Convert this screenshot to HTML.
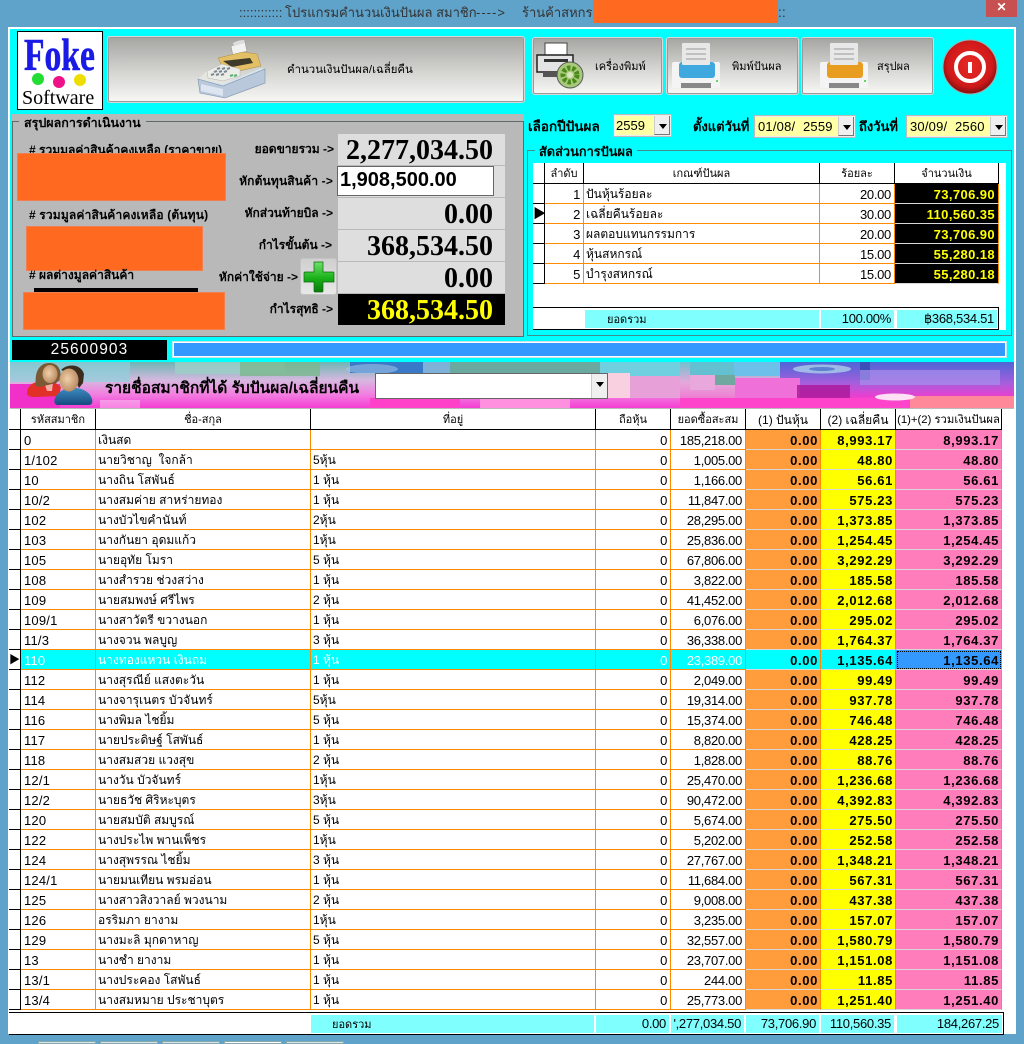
<!DOCTYPE html>
<html lang="th"><head><meta charset="utf-8"><title>โปรแกรมคำนวนเงินปันผล</title>
<style>
*{box-sizing:border-box}
html,body{margin:0;padding:0}
body{width:1024px;height:1044px;position:relative;overflow:hidden;background:#5fa3cb;font-family:"Liberation Sans","WenQuanYi Zen Hei","Noto Sans CJK SC",sans-serif;font-size:11px;color:#000}
.a{position:absolute}
.t{position:absolute;white-space:nowrap}
.b{font-weight:bold}
.r{text-align:right}
.c{text-align:center}
.btn{position:absolute;border:2px solid #d8d8d8;outline:1px solid #9a9a9a;outline-offset:-2px;background:linear-gradient(#a6a6a3,#d5d5d2 55%,#f6f6f4);border-radius:3px}
.big{position:absolute;left:338px;width:167px;padding-right:12px;height:31px;background:#dedede;text-align:right;font:bold 28px/33px "Liberation Serif",serif;overflow:hidden}
.lb{position:absolute;font-size:12px;font-weight:bold;white-space:nowrap;line-height:14px}
.or{position:absolute;background:#ff6a20;border:1px solid #f08050}
.cb{position:absolute;height:23px;background:#ffffa6;border:2px solid #eee;outline:1px solid #bbb;outline-offset:-1px;font-size:13px;line-height:19px;padding-left:2px}
.ar{position:absolute;right:0;top:0;bottom:0;width:16px;background:#efefef;border-left:1px solid #ccc;border-right:1px solid #777;border-bottom:1px solid #777}
.ar:after{content:"";position:absolute;left:4px;top:8px;border:4px solid transparent;border-top:5px solid #000;border-bottom:0}
table{border-collapse:separate;border-spacing:0;table-layout:fixed;position:absolute;background:#fff}
td,th{overflow:hidden;white-space:nowrap;font-weight:normal;border-right:1px solid #ff8a00;border-bottom:1px solid #ff8a00;line-height:17px;padding:2px 3px 0 2px}
th{font-size:11px;border-color:#000;text-align:center;padding:2px 0 0}
#m{left:9px;top:409px;width:993px}
#m td{height:20px;font-size:12px}
#m th{height:21px}
#m td:nth-child(1){border-color:#000;padding:0}
#m td:nth-child(2){font-size:13px;padding-left:3px;letter-spacing:.2px}
#m td:nth-child(3),#m td:nth-child(4){font-size:12px;padding-left:2px}
#m td:nth-child(5),#m td:nth-child(6){text-align:right;font-size:13px;padding-right:3px;letter-spacing:-.3px}
#m td:nth-child(7),#m td:nth-child(8),#m td:nth-child(9){text-align:right;font-weight:bold;font-size:13px;letter-spacing:.65px;padding-right:2px;border-bottom-color:#d8d8d8}
#m td:nth-child(7){background:#ff9c3c}
#m td:nth-child(8){background:#ffff00}
#m td:nth-child(9){background:#ff7dbb}
#m tr.s td{background:#00ffff!important;color:#fff}
#m tr.s td:nth-child(1){background:#fff!important;color:#000;padding:0}
#m tr.s td:nth-child(7),#m tr.s td:nth-child(8),#m tr.s td:nth-child(9){color:#000}
#m tr.s td:nth-child(9){background:#3399ff!important;outline:1px dotted #000;outline-offset:-2px}
#d{left:533px;top:163px;width:466px}
#d td{height:20px;font-size:12px}
#d th{height:21px}
#d td:nth-child(1){border-color:#000;padding:0}
#d td:nth-child(2),#d td:nth-child(4){text-align:right;font-size:13px;letter-spacing:-.3px;padding-right:3px}
#d td:nth-child(5){background:#000;color:#ffff00;text-align:right;font-weight:bold;font-size:13px;letter-spacing:.4px;padding-right:3px;border-bottom-color:#d8d8d8}
.f{position:absolute;background:#80ffff;height:18px;line-height:18px;font-size:13px;text-align:right;padding-right:3px;letter-spacing:-.3px;white-space:nowrap;overflow:hidden}
.f.l{font-size:11px;text-align:left;letter-spacing:0;line-height:17px;padding-top:2px}
</style></head><body>

<!-- title bar -->
<div class="a" style="left:0;top:0;width:1024px;height:27px;background:#5fa3cb"></div>
<div class="t" style="left:239px;top:4px;font-size:13px;line-height:18px;color:#333">::::::::::::</div>
<div class="t" style="left:285px;top:4px;font-size:13px;line-height:18px;color:#333">โปรแกรมคำนวนเงินปันผล สมาชิก</div>
<div class="t" style="left:476px;top:4px;font-size:13px;line-height:18px;color:#333;letter-spacing:1px">----&gt;</div>
<div class="t" style="left:522px;top:4px;font-size:13px;line-height:18px;color:#333">ร้านค้าสหกร</div>
<div class="a" style="left:593px;top:0;width:185px;height:23px;background:#ff6a20"></div>
<div class="t" style="left:778px;top:4px;font-size:14px;color:#333">::</div>
<div class="a" style="left:986px;top:0;width:31px;height:17px;background:#c75050;color:#fff;font:bold 12px/15px 'Liberation Sans',sans-serif;text-align:center">✕</div>

<!-- white client -->
<div class="a" style="left:8px;top:27px;width:1008px;height:1007px;background:#fff"></div>
<div class="a" style="left:10px;top:29px;width:1004px;height:333px;background:#00ffff"></div>

<!-- logo -->
<div class="a" style="left:17px;top:31px;width:86px;height:79px;background:#fff;border:1px solid #000"></div>
<div class="t" style="left:24px;top:32px;font:bold 46px/46px 'Liberation Serif',serif;color:#1a1ae6;-webkit-text-stroke:.6px #1a1ae6;transform:scaleX(.73);transform-origin:left">Foke</div>
<div class="a" style="left:32px;top:73px;width:12px;height:12px;border-radius:50%;background:#22dd33"></div>
<div class="a" style="left:53px;top:76px;width:12px;height:12px;border-radius:50%;background:#ee1188"></div>
<div class="a" style="left:74px;top:74px;width:12px;height:12px;border-radius:50%;background:#eedd00"></div>
<div class="t" style="left:22px;top:88px;font:20px/20px 'Liberation Serif',serif">Software</div>

<!-- calc button -->
<div class="btn" style="left:107px;top:36px;width:418px;height:67px"></div>
<svg class="a" style="left:190px;top:36px" width="80" height="64" viewBox="0 0 80 64">
<path d="M41 10l14-4 2 9-14 5z" fill="#f2f2f2" stroke="#999" stroke-width=".6"/>
<path d="M43 7c3-2 8-3 11-3l1 3-11 3z" fill="#ddd"/>
<path d="M28 22l25-6 14 2 4 12-35 8z" fill="#e3bf66" stroke="#a98b3c" stroke-width=".5"/>
<path d="M33 25l27-3 3 5-21 4z" fill="#3e3b2b"/>
<path d="M8 43l9-8 15-7 18 5 0 7-17 8z" fill="#e6e6e0"/>
<path d="M17 35l15-7 18 5 0 7-17 5-15-3z" fill="#ecece8" stroke="#b4b4b0" stroke-width=".5"/>
<path d="M27 33l3-1m2 1l3-1m2 1l3-1M24 36l3-1m2 1l3-1m2 1l3-1M21 39l3-1m2 1l3-1m2 1l3-1" stroke="#7c8894" stroke-width="2"/>
<path d="M40 40l3-1m1 1l3-1" stroke="#5cb070" stroke-width="2"/>
<path d="M8 43l25 5 38-16 4 1-42 17z" fill="#d8e2ec"/>
<path d="M8 43l2 14 25 5 40-15V33L33 50z" fill="#b9c8da" stroke="#7c93ad" stroke-width=".6"/>
<path d="M11 48l22 5v7l-22-5z" fill="#dde6f0"/>
</svg>
<div class="t" style="left:287px;top:63px;font-size:11.4px;line-height:14px">คำนวนเงินปันผล/เฉลี่ยคืน</div>

<!-- small buttons -->
<div class="btn" style="left:532px;top:37px;width:131px;height:58px"></div>
<svg class="a" style="left:534px;top:41px" width="52" height="49" viewBox="0 0 52 49">
<path d="M11 2h22v12H11z" fill="#fff" stroke="#444"/>
<path d="M3 14h36v17H3z" fill="#e4e4e4" stroke="#222" stroke-width="1.5"/>
<path d="M10 18h24v3H10z" fill="#333"/>
<path d="M9 31h26v5H9z" fill="#555"/>
<circle cx="36" cy="34" r="13" fill="#a9c97a" stroke="#555"/>
<circle cx="36" cy="34" r="3" fill="#d6e6bf"/>
<circle cx="36" cy="34" r="7" fill="none" stroke="#4a8a1a" stroke-width="5" stroke-dasharray="3.2 1.8"/>
</svg>
<div class="t" style="left:595px;top:60px;font-size:11px;line-height:14px">เครื่องพิมพ์</div>

<div class="btn" style="left:666px;top:37px;width:133px;height:58px"></div>
<svg class="a" style="left:671px;top:42px" width="50" height="48" viewBox="0 0 50 48">
<rect x="1" y="20" width="48" height="26" rx="2" fill="#f4f4f4"/>
<rect x="8" y="20" width="36" height="16" rx="3" fill="#3fa9df"/>
<rect x="11" y="1" width="28" height="22" rx="1" fill="#e8e8e8"/>
<path d="M15 7h20M15 12h20M15 17h20" stroke="#999"/>
<path d="M10 41h30v5H10z" fill="#888"/><circle cx="46" cy="39" r="1" fill="#3c3"/>
</svg>
<div class="t" style="left:732px;top:60px;font-size:11px;line-height:14px">พิมพ์ปันผล</div>

<div class="btn" style="left:801px;top:37px;width:133px;height:58px"></div>
<svg class="a" style="left:819px;top:42px" width="50" height="48" viewBox="0 0 50 48">
<rect x="1" y="20" width="48" height="26" rx="2" fill="#f4f4f4"/>
<rect x="8" y="20" width="36" height="16" rx="3" fill="#e89c20"/>
<rect x="11" y="1" width="28" height="22" rx="1" fill="#e8e8e8"/>
<path d="M15 7h20M15 12h20M15 17h20" stroke="#999"/>
<path d="M10 41h30v5H10z" fill="#888"/><circle cx="46" cy="39" r="1" fill="#3c3"/>
</svg>
<div class="t" style="left:877px;top:60px;font-size:11px;line-height:14px">สรุปผล</div>

<svg class="a" style="left:942px;top:38px" width="56" height="58" viewBox="0 0 56 58">
<defs><radialGradient id="rd" cx=".5" cy=".45" r=".55"><stop offset="0" stop-color="#e62a24"/><stop offset=".75" stop-color="#d01a1a"/><stop offset="1" stop-color="#7c1010"/></radialGradient></defs>
<circle cx="28" cy="29" r="27" fill="url(#rd)" stroke="#a8a8a8" stroke-width="1"/>
<circle cx="28" cy="29" r="14" fill="none" stroke="#fff" stroke-width="4"/>
<path d="M26 24h4v11h-4z" fill="#fff"/>
</svg>

<!-- left panel -->
<div class="a" style="left:12px;top:114px;width:512px;height:223px;background:#b9b9b9"></div>
<div class="a" style="left:12px;top:121px;width:512px;height:216px;border:1px solid #5f6a6a"></div>
<div class="t b" style="left:19px;top:116px;padding:0 5px;background:#b9b9b9;font-size:12.5px;line-height:15px">สรุปผลการดำเนินงาน</div>

<div class="lb" style="left:29px;top:143px">#&nbsp;รวมมูลค่าสินค้าคงเหลือ (ราคาขาย)</div>
<div class="or" style="left:17px;top:153px;width:209px;height:48px"></div>
<div class="lb" style="left:29px;top:208px;letter-spacing:.15px">#&nbsp;รวมมูลค่าสินค้าคงเหลือ (ต้นทุน)</div>
<div class="or" style="left:26px;top:226px;width:177px;height:45px"></div>
<div class="lb" style="left:29px;top:268px">#&nbsp;ผลต่างมูลค่าสินค้า</div>
<div class="a" style="left:34px;top:288px;width:164px;height:5px;background:#000"></div>
<div class="or" style="left:23px;top:292px;width:202px;height:38px"></div>

<div class="lb r" style="right:690px;top:142px">ยอดขายรวม -&gt;</div>
<div class="lb r" style="right:691px;top:174px;letter-spacing:.15px">หักต้นทุนสินค้า -&gt;</div>
<div class="lb r" style="right:691px;top:206px">หักส่วนท้ายบิล -&gt;</div>
<div class="lb r" style="right:692px;top:238px">กำไรขั้นต้น -&gt;</div>
<div class="lb r" style="right:726px;top:270px">หักค่าใช้จ่าย -&gt;</div>
<div class="lb r" style="right:691px;top:302px">กำไรสุทธิ -&gt;</div>

<div class="big" style="top:134px">2,277,034.50</div>
<div class="big" style="top:166px"></div>
<div class="a" style="left:337px;top:166px;width:157px;height:30px;background:#fff;border:1px solid #666;font:bold 20px/27px 'Liberation Sans',sans-serif;padding-left:2px;color:#000">1,908,500.00</div>
<div class="big" style="top:198px">0.00</div>
<div class="big" style="top:230px">368,534.50</div>
<div class="big" style="top:262px">0.00</div>
<div class="big" style="top:294px;background:#000;color:#ffff00">368,534.50</div>

<div class="a" style="left:300px;top:258px;width:37px;height:37px;background:linear-gradient(#cfcfcf,#e8e8e8);border:1px solid #c4c4c4;border-radius:3px"></div>
<svg class="a" style="left:303px;top:261px" width="32" height="32" viewBox="0 0 32 32">
<defs><linearGradient id="gp" x1="0" y1="0" x2="0" y2="1"><stop offset="0" stop-color="#6fe06a"/><stop offset=".55" stop-color="#18b018"/><stop offset="1" stop-color="#0b7a0b"/></linearGradient></defs>
<path d="M11 1h9v10h10a1 1 0 0 1 1 1v9h-11v9a1 1 0 0 1-1 1h-7a1 1 0 0 1-1-1v-9H1v-9a1 1 0 0 1 1-1h9z" fill="url(#gp)" stroke="#0d6a0d" stroke-width=".7"/>
</svg>

<!-- selectors -->
<div class="lb" style="left:528px;top:120px;font-size:13.5px">เลือกปีปันผล</div>
<div class="cb" style="left:613px;top:114px;width:59px;padding-left:1px">2559<span class="ar"></span></div>
<div class="lb" style="left:693px;top:120px;font-size:13px">ตั้งแต่วันที่</div>
<div class="cb" style="left:754px;top:115px;width:102px;letter-spacing:.2px">01/08/&nbsp; 2559<span class="ar"></span></div>
<div class="lb" style="left:859px;top:120px;font-size:13px">ถึงวันที่</div>
<div class="cb" style="left:906px;top:115px;width:102px;letter-spacing:.2px">30/09/&nbsp; 2560<span class="ar"></span></div>

<!-- dividend group -->
<div class="a" style="left:527px;top:150px;width:485px;height:186px;border:1px solid #3f8f8f"></div>
<div class="t b" style="left:535px;top:144px;padding:0 4px;background:#00ffff;font-size:12.8px;line-height:15px">สัดส่วนการปันผล</div>
<div class="a" style="left:533px;top:163px;width:473px;height:167px;background:#fff"></div>

<table id="d">
<colgroup><col style="width:12px"><col style="width:39px"><col style="width:236px"><col style="width:75px"><col style="width:104px"></colgroup>
<tr><th>&nbsp;<th>ลำดับ<th>เกณฑ์ปันผล<th>ร้อยละ<th style="border-right:1px solid #000">จำนวนเงิน</tr>
<tr><td><td>1<td>ปันหุ้นร้อยละ<td>20.00<td>73,706.90</tr>
<tr><td style="font-size:13px;line-height:18px;text-align:center;color:#000">▶<td>2<td>เฉลี่ยคืนร้อยละ<td>30.00<td>110,560.35</tr>
<tr><td><td>3<td>ผลตอบแทนกรรมการ<td>20.00<td>73,706.90</tr>
<tr><td><td>4<td>หุ้นสหกรณ์<td>15.00<td>55,280.18</tr>
<tr><td><td>5<td>บำรุงสหกรณ์<td>15.00<td>55,280.18</tr>
</table>
<div class="a" style="left:533px;top:307px;width:466px;height:1px;background:#000"></div>
<div class="a" style="left:533px;top:329px;width:466px;height:1px;background:#000"></div>
<div class="a" style="left:998px;top:307px;width:1px;height:23px;background:#000"></div>
<div class="f l" style="left:585px;top:310px;width:234px;padding-left:22px">ยอดรวม</div>
<div class="f" style="left:821px;top:310px;width:73px">100.00%</div>
<div class="f" style="left:897px;top:310px;width:100px">฿368,534.51</div>

<!-- status -->
<div class="a c" style="left:12px;top:340px;width:155px;height:20px;background:#000;color:#fff;font-size:15.5px;line-height:20px;letter-spacing:1.1px">25600903</div>
<div class="a" style="left:172px;top:341px;width:835px;height:17px;background:#3399ff;border:1px solid #c8e4e8;outline:1px solid #fff;outline-offset:-2px"></div>

<!-- banner -->
<svg class="a" style="left:10px;top:362px" width="1004" height="46" viewBox="0 0 1004 46">
<defs>
<linearGradient id="bb" x1="0" y1="0" x2="0" y2="1"><stop offset="0" stop-color="#6cb6b4"/><stop offset=".4" stop-color="#d7b8df"/><stop offset=".7" stop-color="#f27fe0"/><stop offset="1" stop-color="#f43fd4"/></linearGradient>
<linearGradient id="b2" x1="0" y1="0" x2="0" y2="1"><stop offset="0" stop-color="#4d66d6"/><stop offset=".45" stop-color="#a45fdc"/><stop offset=".75" stop-color="#ea3fcf"/><stop offset="1" stop-color="#ff66cc"/></linearGradient>
<linearGradient id="b3" x1="0" y1="0" x2="0" y2="1"><stop offset="0" stop-color="#6fc2ce"/><stop offset=".45" stop-color="#e6a8da"/><stop offset="1" stop-color="#f45fcf"/></linearGradient>
</defs>
<rect width="1004" height="46" fill="url(#bb)"/>
<rect x="0" y="0" width="120" height="20" fill="#8fd0dc" opacity=".7"/>
<rect x="0" y="22" width="50" height="24" fill="#f030c8"/>
<rect x="165" y="0" width="110" height="12" fill="#9ed0c8" opacity=".8"/>
<rect x="230" y="0" width="80" height="14" fill="#7cb88e" opacity=".8"/>
<rect x="340" y="0" width="73" height="11" fill="#3a78c8"/>
<rect x="413" y="0" width="27" height="12" fill="#7fb0d8"/>
<rect x="440" y="0" width="150" height="12" fill="#6aa8a0"/>
<rect x="590" y="0" width="90" height="14" fill="#70d0e0"/>
<rect x="90" y="38" width="40" height="8" fill="#fff" opacity=".35"/>
<rect x="360" y="36" width="90" height="10" fill="#ff40c8"/>
<rect x="470" y="36" width="90" height="10" fill="#ff90e0"/>
<rect x="598" y="11" width="22" height="25" fill="#f8d0e0"/>
<rect x="620" y="14" width="60" height="22" fill="#e8a0d8"/>
<rect x="670" y="0" width="100" height="46" fill="url(#b3)"/>
<rect x="680" y="0" width="44" height="14" fill="#62c0d0"/>
<rect x="724" y="0" width="46" height="14" fill="#6cc0ea"/>
<rect x="680" y="13" width="25" height="15" fill="#e8a8dc"/>
<rect x="705" y="13" width="20" height="10" fill="#70a8a0"/>
<rect x="770" y="0" width="234" height="46" fill="url(#b2)"/>
<rect x="725" y="16" width="65" height="20" fill="#ee70d8"/>
<rect x="787" y="23" width="53" height="13" fill="#a81898" opacity=".8"/>
<rect x="850" y="0" width="10" height="18" fill="#3c50b8"/>
<rect x="850" y="8" width="140" height="15" fill="#a890ec" opacity=".7"/>
<rect x="670" y="36" width="240" height="10" fill="#ff44cc"/>
<rect x="900" y="34" width="104" height="12" fill="#ff8899"/>
<ellipse cx="812" cy="7" rx="29" ry="4.5" fill="#a8c8e8" opacity=".85"/>
<ellipse cx="812" cy="7" rx="13" ry="2" fill="#5f80d0"/>
<ellipse cx="362" cy="7" rx="26" ry="5" fill="#a8c8e8" opacity=".55"/>
<ellipse cx="885" cy="35" rx="20" ry="3.5" fill="#ffe0f4"/>
</svg>
<div class="a" style="left:10px;top:408px;width:1004px;height:1px;background:#bbb"></div>

<svg class="a" style="left:26px;top:362px" width="70" height="46" viewBox="0 0 70 46">
<defs><radialGradient id="sk" cx=".42" cy=".45" r=".6"><stop offset="0" stop-color="#f0d0a8"/><stop offset="1" stop-color="#b98a62"/></radialGradient>
<linearGradient id="bl" x1="0" y1="0" x2="0" y2="1"><stop offset="0" stop-color="#3c8cc0"/><stop offset="1" stop-color="#174a80"/></linearGradient></defs>
<path d="M1 31c0-7 6-11 14-12l12 0 8 6-2 9-24 1c-5 0-8-1-8-4z" fill="#e03028"/>
<path d="M18 20l9 0-1 9-5 0z" fill="#f0b0a8"/>
<path d="M10 24c-2-13 3-23 13-23s13 8 11 17l-4 3-16 4z" fill="#7a5a34"/>
<ellipse cx="24" cy="12" rx="7.5" ry="9" fill="url(#sk)"/>
<path d="M31 43c-3-1-3-4-2-7 3-6 9-9 13-10h9c6 1 13 4 15 11 1 3 0 6-3 6z" fill="url(#bl)"/>
<path d="M35 8c7-7 20-6 23 4l-1 9-4 5-7-14z" fill="#3c2c1c"/>
<ellipse cx="43" cy="18" rx="9.5" ry="11.5" fill="url(#sk)"/>
</svg>
<div class="t b" style="left:105px;top:379px;font-size:15.5px;line-height:19px">รายชื่อสมาชิกที่ได้ รับปันผล/เฉลี่ยนคืน</div>
<div class="a" style="left:375px;top:373px;width:233px;height:26px;background:#fff;border:1px solid #666"><span class="ar" style="width:16px;border:0;border-left:1px solid #ccc"></span></div>

<!-- main table -->
<table id="m">
<colgroup><col style="width:12px"><col style="width:75px"><col style="width:215px"><col style="width:285px"><col style="width:75px"><col style="width:75px"><col style="width:75px"><col style="width:75px"><col style="width:106px"></colgroup>
<tr><th>&nbsp;<th>รหัสสมาชิก<th>ชื่อ-สกุล<th>ที่อยู่<th>ถือหุ้น<th>ยอดซื้อสะสม<th style="font-size:12px">(1) ปันหุ้น<th style="font-size:12px">(2) เฉลี่ยคืน<th style="font-size:11.3px">(1)+(2) รวมเงินปันผล</tr>
<tr><td><td>0<td>เงินสด<td><td>0<td>185,218.00<td>0.00<td>8,993.17<td>8,993.17</tr>
<tr><td><td>1/102<td>นายวิชาญ&nbsp; ใจกล้า<td>5หุ้น<td>0<td>1,005.00<td>0.00<td>48.80<td>48.80</tr>
<tr><td><td>10<td>นางถิน โสพันธ์<td>1 หุ้น<td>0<td>1,166.00<td>0.00<td>56.61<td>56.61</tr>
<tr><td><td>10/2<td>นางสมค่าย สาหร่ายทอง<td>1 หุ้น<td>0<td>11,847.00<td>0.00<td>575.23<td>575.23</tr>
<tr><td><td>102<td>นางบัวไขคำนันท์<td>2หุ้น<td>0<td>28,295.00<td>0.00<td>1,373.85<td>1,373.85</tr>
<tr><td><td>103<td>นางกันยา อุดมแก้ว<td>1หุ้น<td>0<td>25,836.00<td>0.00<td>1,254.45<td>1,254.45</tr>
<tr><td><td>105<td>นายอุทัย โมรา<td>5 หุ้น<td>0<td>67,806.00<td>0.00<td>3,292.29<td>3,292.29</tr>
<tr><td><td>108<td>นางสำรวย ช่วงสว่าง<td>1 หุ้น<td>0<td>3,822.00<td>0.00<td>185.58<td>185.58</tr>
<tr><td><td>109<td>นายสมพงษ์ ศรีไพร<td>2 หุ้น<td>0<td>41,452.00<td>0.00<td>2,012.68<td>2,012.68</tr>
<tr><td><td>109/1<td>นางสาวัตรี ขวางนอก<td>1 หุ้น<td>0<td>6,076.00<td>0.00<td>295.02<td>295.02</tr>
<tr><td><td>11/3<td>นางจวน พลบูญ<td>3 หุ้น<td>0<td>36,338.00<td>0.00<td>1,764.37<td>1,764.37</tr>
<tr class="s"><td style="font-size:11px;line-height:18px;text-align:center">▶<td>110<td>นางทองแหวน เงินถม<td>1 หุ้น<td>0<td>23,389.00<td>0.00<td>1,135.64<td>1,135.64</tr>
<tr><td><td>112<td>นางสุรณีย์ แสงตะวัน<td>1 หุ้น<td>0<td>2,049.00<td>0.00<td>99.49<td>99.49</tr>
<tr><td><td>114<td>นางจารุเนตร บัวจันทร์<td>5หุ้น<td>0<td>19,314.00<td>0.00<td>937.78<td>937.78</tr>
<tr><td><td>116<td>นางพิมล ไชยิ้ม<td>5 หุ้น<td>0<td>15,374.00<td>0.00<td>746.48<td>746.48</tr>
<tr><td><td>117<td>นายประดิษฐ์ โสพันธ์<td>1 หุ้น<td>0<td>8,820.00<td>0.00<td>428.25<td>428.25</tr>
<tr><td><td>118<td>นางสมสวย แวงสุข<td>2 หุ้น<td>0<td>1,828.00<td>0.00<td>88.76<td>88.76</tr>
<tr><td><td>12/1<td>นางวัน บัวจันทร์<td>1หุ้น<td>0<td>25,470.00<td>0.00<td>1,236.68<td>1,236.68</tr>
<tr><td><td>12/2<td>นายธวัช ศิริหะบุตร<td>3หุ้น<td>0<td>90,472.00<td>0.00<td>4,392.83<td>4,392.83</tr>
<tr><td><td>120<td>นายสมบัติ สมบูรณ์<td>5 หุ้น<td>0<td>5,674.00<td>0.00<td>275.50<td>275.50</tr>
<tr><td><td>122<td>นางประไพ พานเพ็ชร<td>1หุ้น<td>0<td>5,202.00<td>0.00<td>252.58<td>252.58</tr>
<tr><td><td>124<td>นางสุพรรณ ไชยิ้ม<td>3 หุ้น<td>0<td>27,767.00<td>0.00<td>1,348.21<td>1,348.21</tr>
<tr><td><td>124/1<td>นายมนเทียน พรมอ่อน<td>1 หุ้น<td>0<td>11,684.00<td>0.00<td>567.31<td>567.31</tr>
<tr><td><td>125<td>นางสาวสิงวาลย์ พวงนาม<td>2 หุ้น<td>0<td>9,008.00<td>0.00<td>437.38<td>437.38</tr>
<tr><td><td>126<td>อรริมภา ยางาม<td>1หุ้น<td>0<td>3,235.00<td>0.00<td>157.07<td>157.07</tr>
<tr><td><td>129<td>นางมะลิ มุกดาหาญ<td>5 หุ้น<td>0<td>32,557.00<td>0.00<td>1,580.79<td>1,580.79</tr>
<tr><td><td>13<td>นางชำ ยางาม<td>1 หุ้น<td>0<td>23,707.00<td>0.00<td>1,151.08<td>1,151.08</tr>
<tr><td><td>13/1<td>นางประคอง โสพันธ์<td>1 หุ้น<td>0<td>244.00<td>0.00<td>11.85<td>11.85</tr>
<tr><td><td>13/4<td>นางสมหมาย ประชาบุตร<td>1 หุ้น<td>0<td>25,773.00<td>0.00<td>1,251.40<td>1,251.40</tr>
</table>

<!-- footer -->
<div class="a" style="left:9px;top:1012px;width:995px;height:1px;background:#000"></div>
<div class="a" style="left:9px;top:1034px;width:995px;height:1px;background:#000"></div>
<div class="a" style="left:1003px;top:1012px;width:1px;height:22px;background:#000"></div>
<div class="f l" style="left:311px;top:1015px;width:283px;padding-left:21px">ยอดรวม</div>
<div class="f" style="left:596px;top:1015px;width:73px">0.00</div>
<div class="f" style="left:671px;top:1015px;width:73px">',277,034.50</div>
<div class="f" style="left:746px;top:1015px;width:73px">73,706.90</div>
<div class="f" style="left:821px;top:1015px;width:73px">110,560.35</div>
<div class="f" style="left:897px;top:1015px;width:105px">184,267.25</div>

<!-- bottom tabs -->
<div class="a" style="left:38px;top:1041px;width:58px;height:3px;background:#d4e4ee;border:1px solid #8aa"></div>
<div class="a" style="left:100px;top:1041px;width:58px;height:3px;background:#d4e4ee;border:1px solid #8aa"></div>
<div class="a" style="left:162px;top:1041px;width:58px;height:3px;background:#d4e4ee;border:1px solid #8aa"></div>
<div class="a" style="left:224px;top:1041px;width:58px;height:3px;background:#fff;border:1px solid #8aa"></div>
<div class="a" style="left:286px;top:1041px;width:58px;height:3px;background:#d4e4ee;border:1px solid #8aa"></div>
</body></html>
